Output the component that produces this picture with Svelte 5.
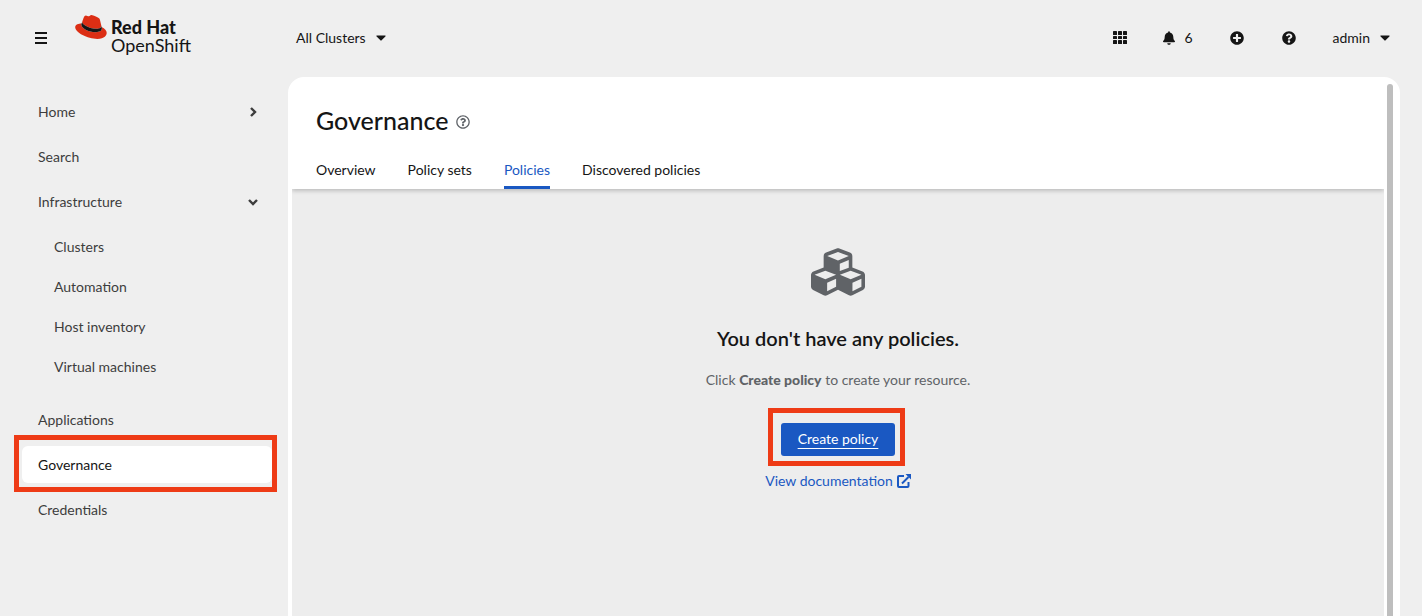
<script>
  const tabs = ['Overview', 'Policy sets', 'Policies', 'Discovered policies'];
  const infrastructure = ['Clusters', 'Automation', 'Host inventory', 'Virtual machines'];
  let activeTab = $state('Policies');
  let infraOpen = $state(true);
</script>

{#snippet caret()}
  <svg class="caret" viewBox="0 0 10 6" aria-hidden="true"><path d="M1 .5h8c.6 0 .8.6.4 1L5.600 5.300a.8.8 0 0 1-1.200 0L.6 1.500C.2 1.100.4.5 1 .5z" /></svg>
{/snippet}

<div class="page">
  <header>
    <div class="brand-area">
      <button class="burger" aria-label="Global navigation">
        <svg viewBox="0 0 14 12" width="14" height="12"><path d="M1 0h12v2H1zM1 5h12v2H1zM1 10h12v2H1z" /></svg>
      </button>
      <a class="brand" href="#home">
        <svg class="hat" viewBox="0 0 192 145" aria-hidden="true">
          <path fill="#dc2e14" d="M127.47,83.49c12.51,0,30.61-2.58,30.61-17.46a14,14,0,0,0-.31-3.42l-7.45-32.36c-1.72-7.12-3.23-10.35-15.73-16.6C124.89,8.69,103.76.5,97.51.5,91.69.5,90,8,83.06,8c-6.68,0-11.64-5.6-17.89-5.6-6,0-9.91,4.09-12.93,12.5,0,0-8.41,23.72-9.49,27.16A6.43,6.43,0,0,0,42.53,44c0,9.22,36.3,39.45,84.94,39.45M160,72.07c1.73,8.19,1.73,9.05,1.73,10.13,0,14-15.74,21.77-36.43,21.77C78.54,104,37.58,76.6,37.58,58.49a18.45,18.45,0,0,1,1.51-7.33C22.27,52,.5,55,.5,74.22c0,31.48,74.59,70.28,133.65,70.28,45.28,0,56.7-20.48,56.7-36.65,0-12.72-11-27.16-30.83-35.78" />
          <path d="M160,72.07c1.73,8.19,1.73,9.05,1.73,10.13,0,14-15.74,21.77-36.43,21.77C78.54,104,37.58,76.6,37.58,58.49a18.45,18.45,0,0,1,1.51-7.33l3.66-9.06A6.43,6.43,0,0,0,42.53,44c0,9.22,36.3,39.45,84.94,39.45,12.51,0,30.61-2.58,30.61-17.46a14,14,0,0,0-.31-3.42Z" />
        </svg>
        <span class="wordmark"><strong>Red Hat</strong><span>OpenShift</span></span>
      </a>
    </div>
    <button class="cluster">All Clusters {@render caret()}</button>
    <div class="tools">
      <button aria-label="Applications">
        <svg viewBox="0 0 14 13" width="14" height="13">
          {#each [0, 5, 10] as x}{#each [0, 5, 9] as y}<rect {x} {y} width="4" height={y === 5 ? 3 : 4} rx=".6" />{/each}{/each}
        </svg>
      </button>
      <button class="bell" aria-label="6 notifications">
        <svg viewBox="0 0 448 512" width="12" height="14"><path d="M224 512c35.32 0 63.97-28.65 63.97-64H160.03c0 35.35 28.65 64 63.97 64zm215.39-149.71c-19.32-20.76-55.47-51.99-55.47-154.29 0-77.7-54.48-139.9-127.94-155.16V32c0-17.67-14.32-32-31.98-32s-31.98 14.33-31.98 32v20.84C118.56 68.1 64.08 130.3 64.08 208c0 102.3-36.15 133.53-55.47 154.29-6 6.45-8.66 14.16-8.61 21.71.11 16.4 12.98 32 32.1 32h383.8c19.12 0 32-15.6 32.1-32 .05-7.55-2.61-15.27-8.61-21.71z" /></svg>
        <span>6</span>
      </button>
      <button class="round" aria-label="Create">
        <svg viewBox="0 0 512 512" width="14" height="14"><path d="M256 8C119 8 8 119 8 256s111 248 248 248 248-111 248-248S393 8 256 8zm144 276c0 6.600-5.400 12-12 12h-92v92c0 6.600-5.400 12-12 12h-56c-6.600 0-12-5.400-12-12v-92h-92c-6.600 0-12-5.400-12-12v-56c0-6.600 5.400-12 12-12h92v-92c0-6.600 5.400-12 12-12h56c6.600 0 12 5.400 12 12v92h92c6.600 0 12 5.400 12 12v56z" /></svg>
      </button>
      <button class="round" aria-label="Help">
        <svg viewBox="0 0 512 512" width="14" height="14"><path d="M504 256c0 136.997-111.043 248-248 248S8 392.997 8 256C8 119.083 119.043 8 256 8s248 111.083 248 248zM262.655 90c-54.497 0-89.255 22.957-116.549 63.758-3.536 5.286-2.353 12.415 2.715 16.258l34.699 26.31c5.205 3.947 12.621 3.008 16.665-2.122 17.864-22.658 30.113-35.797 57.303-35.797 20.429 0 45.698 13.148 45.698 32.958 0 14.976-12.363 22.667-32.534 33.976C247.128 238.528 216 254.941 216 296v4c0 6.627 5.373 12 12 12h56c6.627 0 12-5.373 12-12v-1.333c0-28.462 83.186-29.647 83.186-106.667 0-58.002-60.165-102-116.531-102zM256 338c-25.365 0-46 20.635-46 46 0 25.364 20.635 46 46 46s46-20.636 46-46c0-25.365-20.635-46-46-46z" /></svg>
      </button>
      <button class="user">admin {@render caret()}</button>
    </div>
  </header>

  <div class="body">
    <nav aria-label="Main">
      <button class="item">Home
        <svg viewBox="0 0 10 10" width="10" height="10"><path class="chevron" d="M3 1l4 4-4 4" /></svg>
      </button>
      <a class="item" href="#search">Search</a>
      <button class="item" aria-expanded={infraOpen} onclick={() => (infraOpen = !infraOpen)}>Infrastructure
        <svg viewBox="0 0 10 10" width="10" height="10"><path class="chevron" d="M1 3l4 4 4-4" /></svg>
      </button>
      {#if infraOpen}
        <div class="sub">
          {#each infrastructure as name}<a href="#infrastructure">{name}</a>{/each}
        </div>
      {/if}
      <a class="item" href="#applications">Applications</a>
      <a class="item current" href="#governance" aria-current="page">Governance</a>
      <a class="item" href="#credentials">Credentials</a>
    </nav>

    <main>
      <div class="scroll">
        <div class="heading">
          <div class="title">
            <h1>Governance</h1>
            <button aria-label="More information">
              <svg viewBox="0 0 512 512" width="14" height="14"><path d="M256 8C119.043 8 8 119.083 8 256c0 136.997 111.043 248 248 248s248-111.003 248-248C504 119.083 392.957 8 256 8zm0 448c-110.532 0-200-89.431-200-200 0-110.495 89.472-200 200-200 110.491 0 200 89.471 200 200 0 110.53-89.431 200-200 200zm107.244-255.2c0 67.052-72.421 68.084-72.421 92.863V300c0 6.627-5.373 12-12 12h-45.647c-6.627 0-12-5.373-12-12v-8.659c0-35.745 27.1-50.034 47.579-61.516 17.561-9.845 28.324-16.541 28.324-29.579 0-17.246-21.999-28.693-39.784-28.693-23.189 0-33.894 10.977-48.942 29.969-4.057 5.12-11.46 6.071-16.666 2.124l-27.824-21.098c-5.107-3.872-6.251-11.066-2.644-16.363C184.846 131.491 214.94 112 261.794 112c49.071 0 101.45 38.304 101.45 88.8zM298 368c0 23.159-18.841 42-42 42s-42-18.841-42-42 18.841-42 42-42 42 18.841 42 42z" /></svg>
            </button>
          </div>
          <div class="tabs" role="tablist">
            {#each tabs as tab}
              <button role="tab" aria-selected={tab === activeTab} class:active={tab === activeTab} onclick={() => (activeTab = tab)}>{tab}</button>
            {/each}
          </div>
        </div>
        <section class="empty">
          <svg class="cubes" viewBox="0 0 512 512" width="54" height="54" aria-hidden="true"><path d="M488.6 250.2L392 214V105.5c0-15-9.3-28.4-23.4-33.7l-100-37.5c-8.1-3.1-17.1-3.1-25.3 0l-100 37.5c-14.1 5.3-23.4 18.7-23.4 33.7V214l-96.6 36.2C9.3 255.5 0 268.9 0 283.9V394c0 13.6 7.7 26.1 19.9 32.2l100 50c10.1 5.1 22.1 5.1 32.2 0l103.9-52 103.9 52c10.1 5.1 22.1 5.1 32.2 0l100-50c12.2-6.1 19.9-18.6 19.9-32.2V283.9c0-15-9.3-28.4-23.4-33.7zM358 214.8l-85 31.9v-68.2l85-37v73.3zM154 104.1l102-38.2 102 38.2v.6l-102 41.4-102-41.4v-.6zm84 291.1l-85 42.5v-79.1l85-38.8v75.4zm0-112l-102 41.4-102-41.4v-.6l102-38.2 102 38.2v.6zm240 112l-85 42.5v-79.1l85-38.8v75.4zm0-112l-102 41.4-102-41.4v-.6l102-38.2 102 38.2v.6z" /></svg>
          <h2>You don't have any policies.</h2>
          <p>Click <strong>Create policy</strong> to create your resource.</p>
          <a class="primary" href="#create"><span>Create policy</span></a>
          <a class="docs" href="#docs">View documentation
            <svg viewBox="0 0 14 14" width="14" height="14" aria-hidden="true"><path d="M7 2H2a1 1 0 0 0-1 1v9a1 1 0 0 0 1 1h8.500a1 1 0 0 0 1-1V8M5 9.500L11.500 3" fill="none" stroke="currentColor" stroke-width="2" /><path d="M8.500 0H14v5.500z" fill="currentColor" /></svg>
          </a>
        </section>
      </div>
      <div class="track" aria-hidden="true"></div>
    </main>
  </div>
</div>

<style>
  :global(body) { background: #efefef; }
  .page {
    display: flex;
    flex-direction: column;
    min-height: 100vh;
    background: #efefef;
    color: #151515;
    font-family: Lato, "Liberation Sans", sans-serif;
    font-size: 14px;
    line-height: 21px;
  }
  button { border: 0; padding: 0; background: none; color: inherit; font: inherit; cursor: pointer; }
  a { color: inherit; text-decoration: none; }
  h1, h2, p { margin: 0; }
  svg { display: block; flex: none; fill: currentColor; }

  header { display: flex; align-items: center; height: 77px; box-sizing: border-box; padding: 0 32px 2px 0; }
  .brand-area { display: flex; align-items: center; width: 296px; padding-left: 34px; box-sizing: border-box; gap: 27px; }
  .brand { display: flex; align-items: flex-start; gap: 4px; height: 46px; }
  .hat { width: 32px; height: 24px; }
  .wordmark { display: flex; flex-direction: column; padding-top: 3px; font-size: 18px; line-height: 18px; }
  .wordmark strong { font-weight: 900; }
  .cluster, .user { display: flex; align-items: center; gap: 10px; }
  .caret { width: 10px; height: 6px; }
  .tools { display: flex; align-items: center; margin-left: auto; }
  .tools button { display: flex; align-items: center; }
  .tools button + button { margin-left: 36px; }
  .tools .bell { gap: 9px; }
  .tools .round { justify-content: center; width: 16px; }

  .body { display: flex; flex: 1; }
  nav { display: flex; flex-direction: column; gap: 8px; flex: none; width: 288px; box-sizing: border-box; padding: 16px 16px 24px 22px; color: #3d3d3d; }
  .item { position: relative; display: flex; align-items: center; justify-content: space-between; height: 37px; padding: 0 14px 0 16px; border-radius: 6px; }
  .current { background: #fff; color: #151515; }
  .current::after, .primary::after { content: ""; position: absolute; border: 5px solid #ee3b16; pointer-events: none; }
  .current::after { inset: -11px -5px -9px -8px; }
  .chevron { fill: none; stroke: currentColor; stroke-width: 2.4; }
  .sub { display: flex; flex-direction: column; gap: 4px; padding: 0 0 9px 32px; }
  .sub a { display: flex; align-items: center; height: 36px; }

  main { display: flex; flex: 1; min-width: 0; margin-right: 22px; padding: 0 7px 0 4px; background: #fff; border-radius: 16px 16px 0 0; }
  .scroll { display: flex; flex-direction: column; flex: 1; min-width: 0; }
  .track { width: 6px; margin: 7px 0 0 3px; background: #bebebe; border-radius: 3px 3px 0 0; }
  .heading { position: relative; padding: 27px 24px 0; box-shadow: 0 2px 4px #0003; clip-path: inset(0 0 -8px 0); }
  .title { display: flex; align-items: center; gap: 8px; height: 32px; }
  .title button { color: #5f6368; padding-top: 3px; }
  h1 { font-size: 25px; line-height: 32px; font-weight: 500; }
  .tabs { display: flex; gap: 32px; margin-top: 15px; }
  .tabs button { height: 38px; padding-top: 2px; border-bottom: 3px solid transparent; }
  .tabs .active { color: #1a58c2; border-color: #1a58c2; }

  .empty { display: flex; flex-direction: column; align-items: center; flex: 1; padding: 56px 24px 32px; background: #ededed; text-align: center; }
  .cubes { color: #606367; }
  h2 { margin-top: 26px; font-size: 20px; line-height: 26px; font-weight: 600; }
  p { margin-top: 18px; color: #606367; }
  p strong { font-weight: 900; }
  .primary { position: relative; margin-top: 33px; padding: 5px 17px 7px; border-radius: 3px; background: #1a58c2; color: #fff; }
  .primary span { text-decoration: underline; text-underline-offset: 4px; }
  .primary::after { inset: -15px -10px -10px -13px; }
  .docs { display: flex; align-items: center; gap: 4px; margin-top: 14px; color: #1a58c2; }
</style>
